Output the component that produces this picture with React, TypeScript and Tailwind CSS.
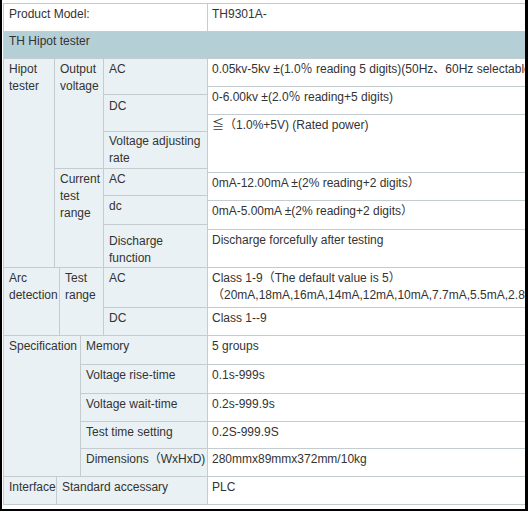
import React from 'react';

const font = { fontFamily: '"Liberation Sans", Arial, "Noto Sans CJK SC", sans-serif' };

interface CellProps {
  className?: string;
  children?: React.ReactNode;
}

// label cells carry the pale blue tint, value cells are white
const Label: React.FC<CellProps> = ({ className = '', children }) => (
  <div className={`border-r border-b border-[#c5ccd0] bg-[#e9f1f4] pl-[5px] pr-[2px] pt-[2px] leading-[17px] whitespace-nowrap ${className}`}>
    {children}
  </div>
);

const Value: React.FC<CellProps> = ({ className = '', children }) => (
  <div className={`border-r border-b border-[#c5ccd0] bg-white pl-[4px] pt-[2px] leading-[17px] whitespace-nowrap ${className}`}>
    {children}
  </div>
);

const specRows = [
  { label: 'Memory', value: '5 groups', h: 'h-[29px]' },
  { label: 'Voltage rise-time', value: '0.1s-999s', h: 'h-[29px]' },
  { label: 'Voltage wait-time', value: '0.2s-999.9s', h: 'h-[28px]' },
  { label: 'Test time setting', value: '0.2S-999.9S', h: 'h-[27px]' },
  { label: 'Dimensions（WxHxD)', value: '280mmx89mmx372mm/10kg', h: 'h-[28px]' },
];

export default function App() {
  return (
    <div className="w-[529px] h-[515px] bg-white text-[12px] text-[#333]" style={font}>
      <div className="w-[528px] h-[511px] border-l-2 border-r-[3px] border-b-2 border-black overflow-hidden pl-px pt-[3px]">
        <div className="w-[700px] border-t border-l border-[#c5ccd0]">
          {/* product model */}
          <div className="flex">
            <Value className="w-[204px] h-[28px] pl-[5px] pt-0">Product Model:</Value>
            <Value className="flex-1 h-[28px] pt-0">TH9301A-</Value>
          </div>

          {/* section header */}
          <div className="h-[27px] border-r border-b border-[#c5ccd0] bg-[#b5cfd6] pl-[5px] leading-[17px] pt-[1px]">
            TH Hipot tester
          </div>

          {/* hipot tester */}
          <div className="flex">
            <div className="flex w-[204px]">
              <Label className="w-[51px] h-[209px]">
                Hipot
                <br />
                tester
              </Label>
              <div className="flex flex-col w-[153px]">
                <div className="flex">
                  <Label className="w-[49px] h-[110px]">
                    Output
                    <br />
                    voltage
                  </Label>
                  <div className="flex flex-col w-[104px]">
                    <Label className="h-[36px]">AC</Label>
                    <Label className="h-[37px] pt-[3px]">DC</Label>
                    <Label className="h-[37px] pt-px">
                      Voltage adjusting
                      <br />
                      rate
                    </Label>
                  </div>
                </div>
                <div className="flex">
                  <Label className="w-[49px] h-[99px]">
                    Current
                    <br />
                    test
                    <br />
                    range
                  </Label>
                  <div className="flex flex-col w-[104px]">
                    <Label className="h-[27px]">AC</Label>
                    <Label className="h-[29px]">dc</Label>
                    <Label className="h-[43px] pt-[8px]">
                      Discharge
                      <br />
                      function
                    </Label>
                  </div>
                </div>
              </div>
            </div>
            <div className="flex flex-col flex-1">
              <Value className="h-[28px]">0.05kv-5kv ±(1.0％ reading 5 digits)(50Hz、60Hz selectable)</Value>
              <Value className="h-[28px]">0-6.00kv ±(2.0％ reading+5 digits)</Value>
              <Value className="h-[58px]">≦（1.0%+5V) (Rated power)</Value>
              <Value className="h-[28px]">0mA-12.00mA ±(2% reading+2 digits）</Value>
              <Value className="h-[29px]">0mA-5.00mA ±(2% reading+2 digits）</Value>
              <Value className="h-[38px]">Discharge forcefully after testing</Value>
            </div>
          </div>

          {/* arc detection */}
          <div className="flex">
            <Label className="w-[56px] h-[68px]">
              Arc
              <br />
              detection
            </Label>
            <Label className="w-[44px] h-[68px]">
              Test
              <br />
              range
            </Label>
            <div className="flex flex-col w-[104px]">
              <Label className="h-[40px]">AC</Label>
              <Label className="h-[28px]">DC</Label>
            </div>
            <div className="flex flex-col flex-1">
              <Value className="h-[40px]">
                Class 1-9（The default value is 5）
                <br />
                （20mA,18mA,16mA,14mA,12mA,10mA,7.7mA,5.5mA,2.8mA,1.5mA）
              </Value>
              <Value className="h-[28px]">Class 1--9</Value>
            </div>
          </div>

          {/* specification */}
          <div className="flex">
            <Label className="w-[77px] h-[141px]">Specification</Label>
            <div className="flex flex-col flex-1">
              {specRows.map(r => (
                <div key={r.label} className="flex">
                  <Label className={`w-[127px] ${r.h}`}>{r.label}</Label>
                  <Value className={`flex-1 ${r.h}`}>{r.value}</Value>
                </div>
              ))}
            </div>
          </div>

          {/* interface */}
          <div className="flex">
            <Label className="w-[53px] h-[28px]">Interface</Label>
            <Label className="w-[151px] h-[28px]">Standard accessary</Label>
            <Value className="flex-1 h-[28px]">PLC</Value>
          </div>
        </div>
      </div>
    </div>
  );
}
